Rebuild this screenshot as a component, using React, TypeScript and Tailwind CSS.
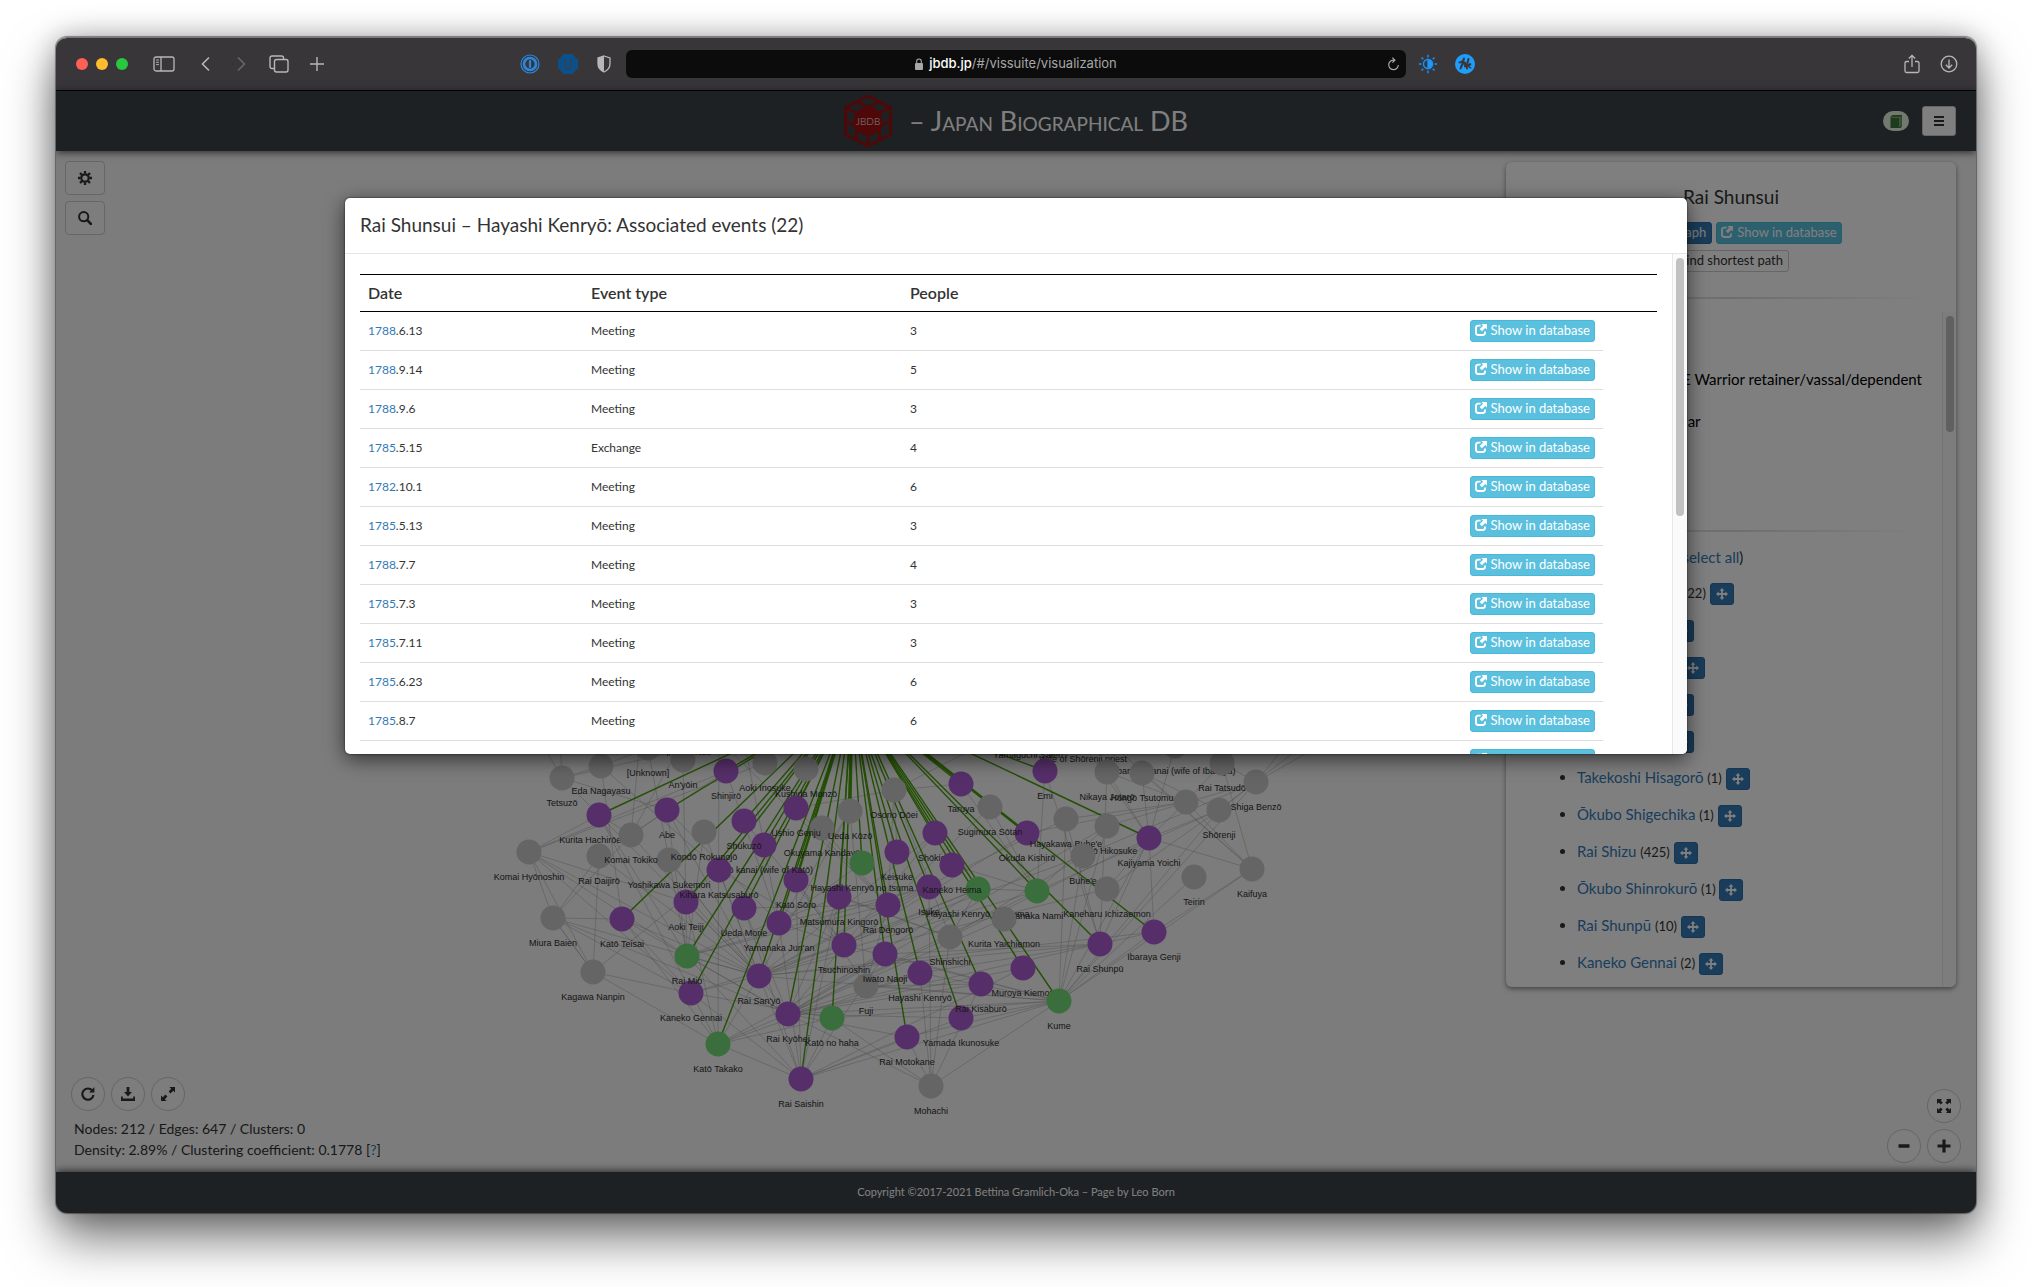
import React from "react";

type Kind = "n" | "p" | "g";
type GraphNode = [number, number, Kind, string];

const HUB: [number, number] = [852, 697];

/* Drawing order matters: later nodes lie over earlier labels. */
const NODES: GraphNode[] = [
  [620, 724, "n", "Junojirō"],
  [669, 728, "n", "Ir"],
  [703, 727, "n", "Nao"],
  [989, 726, "n", "Nimouji"],
  [1028, 730, "n", "Yamaguchi Saien"],
  [1083, 734, "n", "Wife of Shōrenji priest"],
  [1175, 746, "n", "Ibaraya kanai (wife of Ibaraya)"],
  [562, 778, "n", "Tetsuzō"],
  [601, 766, "n", "Eda Nagayasu"],
  [648, 748, "n", "[Unknown]"],
  [683, 760, "n", "An'yōin"],
  [765, 763, "n", "Aoki Inosuke"],
  [806, 769, "n", "Kushida Monzō"],
  [726, 771, "p", "Shinjirō"],
  [599, 815, "p", "Kurita Hachirōemon"],
  [667, 810, "p", "Abe"],
  [669, 860, "n", "Yoshikawa Sukemori"],
  [599, 856, "n", "Rai Daijirō"],
  [631, 835, "n", "Komai Tokiko"],
  [529, 852, "n", "Komai Hyōnoshin"],
  [553, 918, "n", "Miura Baien"],
  [593, 972, "n", "Kagawa Nanpin"],
  [822, 828, "n", "Okuyama Kandayū"],
  [850, 811, "n", "Ueda Kōzō"],
  [796, 880, "p", "Katō Sōro"],
  [764, 845, "p", "Katō kanai (wife of Katō)"],
  [744, 821, "p", "Shukuzō"],
  [796, 808, "p", "Ushio Genju"],
  [686, 902, "p", "Aoki Teiji"],
  [744, 908, "p", "Ueda Morie"],
  [719, 870, "p", "Kihara Katsusaburō"],
  [704, 832, "n", "Kondō Rokunojō"],
  [779, 923, "p", "Yamanaka Jun'an"],
  [839, 897, "p", "Matsumura Kingorō"],
  [862, 863, "g", "Hayashi Kenryō no tsuma"],
  [622, 919, "p", "Katō Teisai"],
  [691, 993, "p", "Kaneko Gennai"],
  [687, 956, "g", "Rai Mio"],
  [788, 1014, "p", "Rai Kyōhei"],
  [759, 976, "p", "Rai San'yō"],
  [832, 1018, "g", "Katō no haha"],
  [718, 1044, "g", "Katō Takako"],
  [801, 1079, "p", "Rai Saishin"],
  [866, 986, "n", "Fuji"],
  [844, 945, "p", "Tsuchinoshin"],
  [894, 790, "n", "Osono Dōei"],
  [897, 852, "p", "Keisuke"],
  [935, 833, "p", "Shōkichi"],
  [929, 887, "p", "Isuke"],
  [978, 889, "g", "Hayashi Kenryō no tsuma"],
  [952, 865, "p", "Kaneko Heima"],
  [885, 954, "p", "Iwato Naoji"],
  [888, 905, "p", "Rai Dengorō"],
  [950, 937, "n", "Shinshichi"],
  [920, 973, "p", "Hayashi Kenryō"],
  [961, 1018, "p", "Yamada Ikunosuke"],
  [981, 984, "p", "Rai Kisaburō"],
  [907, 1037, "p", "Rai Motokane"],
  [1023, 968, "p", "Muroya Kiemon"],
  [961, 784, "p", "Taruya"],
  [1045, 771, "p", "Emi"],
  [1027, 833, "p", "Okuda Kishirō"],
  [990, 807, "n", "Sugimura Sōtan"],
  [1037, 891, "g", "Tanaka Nami"],
  [1004, 919, "n", "Kurita Yaichiemon"],
  [1066, 819, "n", "Hayakawa Buhe'e"],
  [1107, 826, "n", "Kudō Hikosuke"],
  [1083, 856, "n", "Buhe'e"],
  [1107, 889, "n", "Kaneharu Ichizaemon"],
  [1107, 772, "n", "Nikaya Jotarō"],
  [1142, 773, "n", "Hongō Tsutomu"],
  [1222, 763, "n", "Rai Tatsudō"],
  [1256, 782, "n", "Shiga Benzō"],
  [1219, 810, "n", "Shōrenji"],
  [1186, 802, "n", ""],
  [1149, 838, "p", "Kajiyama Yoichi"],
  [1194, 877, "n", "Teirin"],
  [1252, 869, "n", "Kaifuya"],
  [1154, 932, "p", "Ibaraya Genji"],
  [1100, 944, "p", "Rai Shunpū"],
  [1059, 1001, "g", "Kume"],
  [931, 1086, "n", "Mohachi"],
];

/* Each entry: a source point followed by the points it is tied to. */
const TIES: number[][] = [
  [759, 976, 553, 918, 622, 919, 686, 902, 687, 956, 529, 852, 719, 870, 669, 860, 599, 815, 631, 835, 850, 811, 888, 905, 929, 887, 978, 889, 1037, 891, 1107, 889, 1083, 856, 1100, 944, 1154, 932, 935, 833, 599, 856, 704, 832, 667, 810],
  [788, 1014, 687, 956, 622, 919, 744, 908, 844, 945, 885, 954, 920, 973, 950, 937, 1023, 968, 1100, 944, 978, 889, 1004, 919, 1037, 891, 1059, 1001, 981, 984, 961, 1018, 907, 1037, 669, 860, 839, 897, 553, 918, 1107, 826],
  [801, 1079, 718, 1044, 691, 993, 687, 956, 744, 908, 779, 923, 759, 976, 832, 1018, 839, 897, 885, 954, 907, 1037, 961, 1018, 1059, 1001, 1023, 968, 796, 880],
  [718, 1044, 622, 919, 686, 902, 599, 815, 759, 976, 788, 1014, 832, 1018, 885, 954, 920, 973, 719, 740, 593, 972],
  [1059, 1001, 961, 1018, 920, 973, 885, 954, 866, 986, 832, 1018, 907, 1037, 1149, 838, 1252, 869, 1194, 877, 1107, 826, 1154, 932, 1066, 819, 1219, 810, 1256, 782, 844, 945, 759, 976, 1083, 856],
  [931, 1086, 832, 1018, 788, 1014, 1059, 1001, 920, 973, 929, 887, 981, 984, 907, 1037, 950, 937],
  [691, 993, 593, 972, 553, 918, 529, 852, 759, 976, 832, 1018, 622, 919, 844, 945],
  [553, 918, 529, 852, 631, 835, 593, 972, 622, 919, 599, 856],
  [593, 972, 599, 856, 553, 918, 719, 870, 529, 852],
  [529, 852, 599, 815, 686, 902, 687, 956, 726, 771, 765, 763],
  [562, 778, 601, 766, 540, 740, 599, 815, 667, 810, 560, 740, 726, 740],
  [601, 766, 648, 748, 719, 870, 622, 919, 590, 740],
  [687, 956, 667, 810, 648, 748, 704, 832, 683, 760, 599, 815, 839, 897, 888, 905, 929, 887],
  [631, 835, 667, 810, 726, 771, 683, 740, 640, 740, 599, 815],
  [1256, 782, 1107, 826, 1222, 763, 1219, 810, 1290, 740, 1330, 740, 1083, 856],
  [1219, 810, 1149, 838, 1107, 889, 1310, 740, 1142, 773, 1037, 891],
  [1186, 802, 1107, 772, 1252, 869, 1066, 819, 1027, 833, 1222, 763, 1149, 838],
  [1149, 838, 1107, 772, 1142, 773, 1252, 869, 1080, 740, 1107, 889, 1154, 932, 1175, 746],
  [1100, 944, 1107, 772, 1045, 771, 1154, 932, 920, 973, 885, 954, 1066, 819, 1149, 838],
  [1252, 869, 1154, 932, 1222, 763, 1107, 740, 1142, 773],
  [1037, 891, 990, 807, 1107, 826, 961, 784, 952, 865, 929, 887, 1045, 771],
  [950, 937, 839, 897, 978, 889, 1083, 856, 796, 880, 1149, 838, 894, 790],
  [844, 945, 796, 880, 719, 870, 929, 887, 978, 889, 779, 923, 935, 833, 1027, 833, 744, 821],
  [888, 905, 744, 908, 796, 808, 822, 828, 894, 790, 990, 807, 1066, 819, 719, 740],
  [779, 923, 726, 771, 667, 810, 744, 740, 850, 811, 862, 863, 929, 887],
  [894, 790, 860, 740, 961, 784, 796, 808, 990, 740, 897, 852],
  [866, 986, 796, 880, 888, 905, 850, 811, 981, 984, 920, 973],
];

const FILL: Record<Kind, string> = { n: "#cacaca", p: "#ac5fd4", g: "#74dc78" };

function Network() {
  return (
    <svg
      className="absolute inset-0 h-full w-full"
      viewBox="56 151 1920 1021"
      preserveAspectRatio="xMidYMax meet"
      role="img"
      aria-label="Network graph"
    >
      <g stroke="#8c8c8c" strokeOpacity="0.36" strokeWidth="1">
        {TIES.flatMap((t, i) => {
          const out: React.ReactElement[] = [];
          for (let k = 2; k < t.length; k += 2) {
            out.push(<line key={`${i}-${k}`} x1={t[0]} y1={t[1]} x2={t[k]} y2={t[k + 1]} />);
          }
          return out;
        })}
      </g>
      <g stroke="#48a00a" strokeWidth="1.4">
        {NODES.filter((n) => n[2] !== "n").map((n, i) => (
          <line key={i} x1={HUB[0]} y1={HUB[1]} x2={n[0]} y2={n[1]} />
        ))}
        <line x1={HUB[0] + 3} y1={HUB[1]} x2="1027" y2="833" strokeWidth="2.4" />
        <line x1={HUB[0]} y1={HUB[1]} x2="796" y2="880" strokeWidth="2.4" />
        <line x1={HUB[0]} y1={HUB[1]} x2="850" y2="811" strokeWidth="3" />
      </g>
      <g fontFamily="'Liberation Sans', Arial, sans-serif" fontSize="9" textAnchor="middle" fill="#2c2c2c">
        {NODES.map((n, i) => (
          <g key={i}>
            <circle cx={n[0]} cy={n[1]} r="12.5" fill={FILL[n[2]]} />
            <text x={n[0]} y={n[1] + 28}>{n[3]}</text>
          </g>
        ))}
      </g>
    </svg>
  );
}

/* ---------- icons ---------- */

type IconProps = { className?: string };

const ShareIcon = ({ className = "size-3" }: IconProps) => (
  <svg className={className} viewBox="0 0 12 12" fill="none" aria-hidden="true">
    <path d="M5.6 1.6H3.2A2.2 2.2 0 0 0 1 3.8v5A2.2 2.2 0 0 0 3.2 11h4.6A2.2 2.2 0 0 0 10 8.8V7.4" stroke="currentColor" strokeWidth="1.9" />
    <path d="M6.4 0H12v5.6L10.300 3.900 6.900 7.300 4.700 5.100 8.100 1.700z" fill="currentColor" />
  </svg>
);

const MoveIcon = ({ className = "size-3" }: IconProps) => (
  <svg className={className} viewBox="0 0 12 12" fill="currentColor" aria-hidden="true">
    <path d="M6 0l2.4 2.7H6.9v2.4h2.4V3.6L12 6 9.3 8.4V6.9H6.9v2.4h1.5L6 12 3.6 9.3h1.5V6.9H2.7v1.5L0 6l2.7-2.4v1.5h2.4V2.7H3.6z" />
  </svg>
);

const CogIcon = () => (
  <svg className="size-[14px]" viewBox="0 0 14 14" fill="none" stroke="currentColor" aria-hidden="true">
    <circle cx="7" cy="7" r="3.7" strokeWidth="2.2" />
    <path d="M7 0v2.6M7 11.4V14M0 7h2.6M11.4 7H14M2 2l1.9 1.9M10.1 10.1L12 12M12 2l-1.9 1.9M3.9 10.1L2 12" strokeWidth="2.3" />
  </svg>
);

const SearchIcon = () => (
  <svg className="size-[14px]" viewBox="0 0 14 14" fill="none" stroke="currentColor" aria-hidden="true">
    <circle cx="5.7" cy="5.7" r="4.6" strokeWidth="2" />
    <path d="M9.2 9.2l3.8 3.8" strokeWidth="2.6" strokeLinecap="round" />
  </svg>
);

const RepeatIcon = () => (
  <svg className="size-[14px]" viewBox="0 0 14 14" fill="none" aria-hidden="true">
    <path d="M11.2 3.4A5.6 5.6 0 1 0 12.5 8" stroke="currentColor" strokeWidth="2.1" />
    <path d="M13.4 0v5.4H8z" fill="currentColor" />
  </svg>
);

const SaveIcon = () => (
  <svg className="size-[14px]" viewBox="0 0 14 14" fill="currentColor" aria-hidden="true">
    <path d="M5.6 0h2.8v5H11L7 9.6 3 5h2.6zM0 9.4h1.8v2h10.4v-2H14V14H0z" />
  </svg>
);

const ResizeFullIcon = () => (
  <svg className="size-[14px]" viewBox="0 0 14 14" fill="currentColor" aria-hidden="true">
    <path d="M8.4 0H14v5.6l-1.8-1.8-2.6 2.6-2-2 2.6-2.6zM5.6 14H0V8.4l1.8 1.8 2.6-2.6 2 2-2.6 2.6z" />
  </svg>
);

const FullscreenIcon = () => (
  <svg className="size-[14px]" viewBox="0 0 14 14" fill="currentColor" aria-hidden="true">
    <path d="M0 0h5L3.7 1.5 5.7 3.5 3.9 5.5 1.7 3.5 0 5zM14 0v5l-1.6-1.5-2.2 2-1.9-2 2-2L9 0zM0 14V9l1.6 1.5 2.2-2 1.9 2-2 2L5 14zM14 14H9l1.3-1.5-2-2 1.9-2 2.2 2L14 9z" />
  </svg>
);

const MinusIcon = () => (
  <svg className="size-[14px]" viewBox="0 0 14 14" fill="currentColor" aria-hidden="true">
    <rect x="1.5" y="5.2" width="11" height="3.6" rx="0.4" />
  </svg>
);

const PlusIcon = () => (
  <svg className="size-[14px]" viewBox="0 0 14 14" fill="currentColor" aria-hidden="true">
    <path d="M5.4.6h3.2v4.8h4.9v3.2H8.6v4.8H5.4V8.6H.5V5.4h4.9z" />
  </svg>
);

const Logo = () => (
  <span className="relative flex h-[54px] w-12 items-center justify-center">
    <svg className="absolute inset-0 h-full w-full" viewBox="0 0 48 54" fill="none" stroke="#9f1010" aria-hidden="true">
      <path d="M24 2l22.500 11.500v27L24 52 1.500 40.500v-27z" strokeWidth="3" strokeLinejoin="round" />
      <path d="M2 13.500L24 25l22-11.500M24 25v27M13 7.500l22.500 12M35 7.500l-22.500 12M2 27l22 12 22-12M12.500 19v27M35.500 19v27" strokeWidth="3" />
      <circle cx="24" cy="27" r="14.500" fill="#9f1010" stroke="none" />
    </svg>
    <span className="relative text-[10px] font-light text-white">JBDB</span>
  </span>
);

/* ---------- browser chrome ---------- */

function Toolbar() {
  return (
    <header className="grid h-[53px] shrink-0 grid-cols-[1fr_minmax(0,780px)_1fr] items-center border-b border-black bg-[#39363a] text-[#b8b6b9]">
      <div className="flex items-center justify-between pr-[14px] pl-5">
        <div className="flex items-center">
          <div className="flex gap-2">
            <button aria-label="Close" className="size-3 rounded-full bg-[#ff5f57]" />
            <button aria-label="Minimize" className="size-3 rounded-full bg-[#febc2e]" />
            <button aria-label="Zoom" className="size-3 rounded-full bg-[#28c840]" />
          </div>
          <button aria-label="Sidebar" className="ml-[25px]">
            <svg width="22" height="16" viewBox="0 0 22 16" fill="none" stroke="currentColor" strokeWidth="1.300">
              <rect x="1" y="1" width="20" height="14" rx="2" />
              <path d="M8 1v14" />
              <path d="M3.200 4h2.600M3.200 6.300h2.600M3.200 8.600h2.600" strokeWidth="1" />
            </svg>
          </button>
          <button aria-label="Back" className="ml-6">
            <svg width="14" height="16" viewBox="0 0 14 16" fill="none" stroke="currentColor" strokeWidth="1.600"><path d="M10 1.500L3.500 8l6.500 6.500" /></svg>
          </button>
          <button aria-label="Forward" className="ml-[22px] text-[#69666a]">
            <svg width="14" height="16" viewBox="0 0 14 16" fill="none" stroke="currentColor" strokeWidth="1.600"><path d="M3 1.500L9.500 8 3 14.500" /></svg>
          </button>
          <button aria-label="Tabs" className="ml-5">
            <svg width="20" height="18" viewBox="0 0 20 18" fill="none" stroke="currentColor" strokeWidth="1.400">
              <rect x="5.500" y="4.500" width="13.500" height="12.500" rx="2" />
              <path d="M5.500 13.500H3a2 2 0 0 1-2-2V3a2 2 0 0 1 2-2h9.500a2 2 0 0 1 2 2v1.500" />
            </svg>
          </button>
          <button aria-label="New tab" className="ml-5">
            <svg width="16" height="16" viewBox="0 0 16 16" fill="none" stroke="currentColor" strokeWidth="1.400"><path d="M8 1v14M1 8h14" /></svg>
          </button>
        </div>
        <div className="flex items-center">
          <button aria-label="Password manager">
            <svg width="20" height="20" viewBox="0 0 20 20" fill="none" stroke="#2b87dc">
              <circle cx="10" cy="10" r="9" strokeWidth="1.200" />
              <circle cx="10" cy="10" r="6" strokeWidth="2.600" />
              <path d="M10 6.300v7.400" strokeWidth="2.200" />
            </svg>
          </button>
          <button aria-label="Content blocker" className="ml-[18px]">
            <svg width="20" height="20" viewBox="0 0 20 20">
              <path d="M6 0h8l6 6v8l-6 6H6l-6-6V6z" fill="#0c5089" />
              <path d="M7 5v6.500a3 3 0 0 0 6 0V5" fill="none" stroke="#2b4560" strokeWidth="2" />
            </svg>
          </button>
          <button aria-label="Privacy report" className="ml-[18px]">
            <svg width="16" height="18" viewBox="0 0 16 18" fill="none">
              <path d="M8 1l6 2v6c0 4-3 6.500-6 8-3-1.500-6-4-6-8V3z" stroke="#b8b6b9" strokeWidth="1.300" />
              <path d="M8 1v16c-3-1.500-6-4-6-8V3z" fill="#b8b6b9" />
            </svg>
          </button>
        </div>
      </div>
      <div className="relative flex h-7 items-center justify-center gap-[6px] rounded-md bg-[#0c0c0c] font-[Inter,sans-serif] text-[13px] text-[#a7a7a7]">
        <svg width="8" height="12" viewBox="0 0 8 12" aria-hidden="true">
          <rect y="5" width="8" height="7" rx="1" fill="#a7a7a7" />
          <path d="M1.700 5.500V3.300a2.300 2.300 0 0 1 4.600 0v2.200" fill="none" stroke="#a7a7a7" strokeWidth="1.100" />
        </svg>
        <span><span className="font-medium text-white">jbdb.jp</span>/#/vissuite/visualization</span>
        <button aria-label="Reload" className="absolute right-[6px]">
          <svg width="13" height="14" viewBox="0 0 13 14" fill="none" stroke="#a7a7a7" strokeWidth="1.200">
            <path d="M7.500 3.200A4.800 4.800 0 1 0 11.300 8M5.400.7l2.500 2.500-2.500 2.500" />
          </svg>
        </button>
      </div>
      <div className="flex items-center justify-between pr-[18px] pl-3">
        <div className="flex items-center gap-[17px]">
          <button aria-label="Brightness">
            <svg width="20" height="20" viewBox="0 0 20 20" fill="none" stroke="#1d8fee" strokeWidth="1.500">
              <circle cx="10" cy="10" r="4.500" />
              <path d="M10 5.500a4.500 4.500 0 0 1 0 9z" fill="#1d9bff" />
              <path d="M10 .8v2.600M10 16.600v2.600M.8 10h2.600M16.600 10h2.600M3.500 3.500l1.800 1.800M14.700 14.700l1.800 1.800M16.500 3.500l-1.800 1.800M5.300 14.700l-1.800 1.800" />
            </svg>
          </button>
          <button aria-label="Notes">
            <svg width="20" height="20" viewBox="0 0 20 20" fill="none">
              <circle cx="10" cy="10" r="10" fill="#1f9dfb" />
              <path d="M4.500 8.500C7 8 9 6 9 4.500 8.500 8 6.500 11 5.500 14.500 7 11 9 8.500 10 8.500s-.8 4 .2 4C11.500 12.500 13 7.500 13.500 5 12.500 9 11.500 12 12 14.500" stroke="#39363a" strokeWidth="1.900" strokeLinecap="round" strokeLinejoin="round" />
              <path d="M12.500 12c1-1.500 2.500-2.500 3-2s-1.500 1.800-2.500 1.800c1.300.2 1.200 2.200 2.700 2" stroke="#39363a" strokeWidth="1.500" strokeLinecap="round" />
            </svg>
          </button>
        </div>
        <div className="flex items-center gap-[19px]">
          <button aria-label="Share">
            <svg width="18" height="20" viewBox="0 0 18 20" fill="none" stroke="currentColor" strokeWidth="1.300">
              <path d="M6 7.500H3.500A1.500 1.500 0 0 0 2 9v8a1.500 1.500 0 0 0 1.500 1.500h11A1.500 1.500 0 0 0 16 17V9a1.500 1.500 0 0 0-1.500-1.500H12M9 13V1.500M5.800 4.500L9 1.300l3.200 3.200" />
            </svg>
          </button>
          <button aria-label="Downloads">
            <svg width="18" height="18" viewBox="0 0 18 18" fill="none" stroke="currentColor" strokeWidth="1.300">
              <circle cx="9" cy="9" r="7.800" />
              <path d="M9 4.500v8.500M5.800 9.800L9 13l3.200-3.200" />
            </svg>
          </button>
        </div>
      </div>
    </header>
  );
}

/* ---------- page ---------- */

function NavBar() {
  return (
    <nav className="relative z-10 grid h-[60px] shrink-0 grid-cols-[1fr_auto_1fr] items-center bg-[#3a4247] pr-5 pl-5 shadow-[0_1px_8px_rgba(0,0,0,0.7)]">
      <span />
      <a href="#/" className="flex items-center gap-[17px] text-[27px] text-white">
        <Logo />
        <span className="[font-variant:small-caps]">– Japan Biographical DB</span>
      </a>
      <div className="flex items-center justify-end gap-[13px]">
        <button aria-label="Glossary" className="flex h-5 w-[26px] items-center justify-center rounded-full bg-[#e4f4e0]">
          <svg width="12" height="13" viewBox="0 0 12 13" aria-hidden="true">
            <path d="M2.500 0H12v11.500L10.500 13H.5V1.800z" fill="#3c763d" />
            <path d="M1.500 2.300h8.300v9.500M11 1v10.500" fill="none" stroke="#a5cfa0" strokeWidth="0.800" />
          </svg>
        </button>
        <button aria-label="Menu" className="flex h-[30px] w-[34px] items-center justify-center rounded-[3px] border border-[#ccc] bg-white text-[#333]">
          <svg width="10" height="10" viewBox="0 0 10 10" fill="currentColor" aria-hidden="true">
            <path d="M0 0h10v2H0zM0 4h10v2H0zM0 8h10v2H0z" />
          </svg>
        </button>
      </div>
    </nav>
  );
}

const InfoButton = () => (
  <button className="inline-flex h-[22px] items-center gap-1 rounded-[3px] border border-[#46b8da] bg-[#5bc0de] px-1 text-[13px] whitespace-nowrap text-white">
    <ShareIcon className="mb-[2px] size-3" />
    Show in database
  </button>
);

const RELATED: [string, number][] = [
  ["Hayashi Kenryō", 22],
  ["Itō Shinjirō", 1],
  ["Rai Kisaburō", 3],
  ["Katō Teisai", 1],
  ["Itō Shinjirō", 1],
  ["Takekoshi Hisagorō", 1],
  ["Ōkubo Shigechika", 1],
  ["Rai Shizu", 425],
  ["Ōkubo Shinrokurō", 1],
  ["Rai Shunpū", 10],
  ["Kaneko Gennai", 2],
];

function PersonPanel() {
  return (
    <aside className="relative mt-[11px] mr-5 ml-auto flex h-[825px] w-[450px] flex-col overflow-hidden rounded-md bg-white text-[15px] text-[#333] shadow-[0_2px_5px_rgba(0,0,0,0.45)]">
      <h2 className="mt-[23px] text-center text-[19px] leading-6">Rai Shunsui</h2>
      <div className="mt-[13px] flex flex-col items-center gap-[6px] text-[13px]">
        <div className="flex gap-1 pr-2">
          <button className="h-[22px] rounded-[3px] border border-[#2e6da4] bg-[#337ab7] px-[5px] text-white">Center in graph</button>
          <InfoButton />
        </div>
        <button className="h-[22px] rounded-[3px] border border-[#ccc] bg-white px-[5px]">Find shortest path</button>
      </div>
      <div className="mx-5 mt-[25px] h-[2px] bg-linear-to-r from-transparent via-[#dcdcdc] to-transparent" />
      <div className="mt-[13px] flex min-h-0 flex-1">
        <div className="min-w-0 flex-1 overflow-hidden px-5">
          <p className="mt-[57px] text-right leading-5 whitespace-nowrap text-black">Status: 武士 / 家臣 E Warrior retainer/vassal/dependent</p>
          <p className="mt-[22px] pl-[72px] leading-5 text-black">Occup.: Scholar</p>
          <div className="mt-[99px] h-[2px] bg-linear-to-r from-transparent via-[#dcdcdc] to-transparent" />
          <p className="mt-[15px] pl-[110px] leading-5">Edges (<a href="#all" className="text-[#337ab7]">select all</a>)</p>
          <ul className="mt-[7px] list-disc pl-[51px]">
            {RELATED.map(([name, count], i) => (
              <li key={i} className="h-[37px] leading-[37px]">
                <a href="#person" className="text-[#337ab7]">{name}</a> <span className="text-[13px]">({count})</span>{" "}
                <button aria-label={`Move to ${name}`} className="inline-flex h-[22px] w-6 items-center justify-center rounded-[3px] border border-[#2e6da4] bg-[#337ab7] align-middle text-white">
                  <MoveIcon />
                </button>
              </li>
            ))}
          </ul>
        </div>
        <div className="w-[14px] shrink-0 border-l border-[#e8e8e8] bg-[#fafafa] pt-1 pl-[3px]">
          <div className="h-[116px] w-2 rounded-full bg-[#c1c1c1]" />
        </div>
      </div>
    </aside>
  );
}

const ROUND = "flex size-[34px] items-center justify-center rounded-full border border-[#ccc] bg-white/40 text-[#333]";
const SQUARE = "flex h-[34px] w-10 items-center justify-center rounded-[4px] border border-[#ccc] bg-white/40 text-[#333]";

function Workspace() {
  return (
    <main className="relative min-h-0 flex-1 bg-[#f8f8f8] text-[#333]">
      <Network />
      <div className="absolute top-[10px] left-[9px] flex flex-col gap-[6px]">
        <button aria-label="Settings" className={SQUARE}><CogIcon /></button>
        <button aria-label="Search" className={SQUARE}><SearchIcon /></button>
      </div>
      <PersonPanel />
      <div className="absolute bottom-3 left-[15px]">
        <div className="flex gap-[6px]">
          <button aria-label="Reload graph" className={ROUND}><RepeatIcon /></button>
          <button aria-label="Download graph" className={ROUND}><SaveIcon /></button>
          <button aria-label="Expand graph" className={ROUND}><ResizeFullIcon /></button>
        </div>
        <p className="mt-[7px] pl-[3px] text-sm leading-[21px]">
          Nodes: 212 / Edges: 647 / Clusters: 0<br />
          Density: 2.89% / Clustering coefficient: 0.1778 [<a href="#help" className="text-[#337ab7]">?</a>]
        </p>
      </div>
      <div className="absolute right-[15px] bottom-[9px] flex flex-col items-end gap-[6px]">
        <button aria-label="Fit" className={ROUND}><FullscreenIcon /></button>
        <div className="flex gap-[6px]">
          <button aria-label="Zoom out" className={ROUND}><MinusIcon /></button>
          <button aria-label="Zoom in" className={ROUND}><PlusIcon /></button>
        </div>
      </div>
    </main>
  );
}

/* ---------- dialog ---------- */

const EVENTS: [string, string, string, number][] = [
  ["1788", ".6.13", "Meeting", 3],
  ["1788", ".9.14", "Meeting", 5],
  ["1788", ".9.6", "Meeting", 3],
  ["1785", ".5.15", "Exchange", 4],
  ["1782", ".10.1", "Meeting", 6],
  ["1785", ".5.13", "Meeting", 3],
  ["1788", ".7.7", "Meeting", 4],
  ["1785", ".7.3", "Meeting", 3],
  ["1785", ".7.11", "Meeting", 3],
  ["1785", ".6.23", "Meeting", 6],
  ["1785", ".8.7", "Meeting", 6],
];

function EventsDialog() {
  return (
    <section role="dialog" aria-labelledby="dialog-title" className="mx-auto flex h-[556px] w-[70%] max-w-[1342px] flex-col overflow-hidden rounded-[5px] bg-white text-[#333] shadow-[0_5px_20px_rgba(0,0,0,0.6),0_0_2px_rgba(0,0,0,0.8)]">
      <h1 id="dialog-title" className="border-b border-[#e5e5e5] px-[15px] pt-[15px] pb-4 text-[19px] leading-6">
        Rai Shunsui – Hayashi Kenryō: Associated events (22)
      </h1>
      <div className="flex min-h-0 flex-1">
        <div className="min-w-0 flex-1 overflow-hidden pt-5 pr-[15px] pl-[15px]">
          <table className="w-full table-fixed border-collapse text-left text-xs">
            <colgroup>
              <col className="w-[223px]" />
              <col className="w-[319px]" />
              <col />
              <col className="w-[141px]" />
              <col className="w-[54px]" />
            </colgroup>
            <thead>
              <tr className="h-[37px] border-y border-black text-base">
                <th className="px-2 font-semibold">Date</th>
                <th className="px-2 font-semibold">Event type</th>
                <th className="px-2 font-semibold" colSpan={3}>People</th>
              </tr>
            </thead>
            <tbody>
              {EVENTS.map(([year, rest, type, people], i) => (
                <tr key={i} className="h-[39px]">
                  <td className="border-b border-[#ddd] px-2"><a href="#year" className="text-[#337ab7]">{year}</a>{rest}</td>
                  <td className="border-b border-[#ddd] px-2">{type}</td>
                  <td className="border-b border-[#ddd] px-2">{people}</td>
                  <td className="border-b border-[#ddd] pr-2 text-right"><InfoButton /></td>
                  <td />
                </tr>
              ))}
              <tr className="h-[39px]">
                <td colSpan={3} />
                <td className="pr-2 text-right"><InfoButton /></td>
                <td />
              </tr>
            </tbody>
          </table>
        </div>
        <div className="w-[15px] shrink-0 border-l border-[#e8e8e8] bg-[#fafafa] pt-1 pl-[3px]">
          <div className="h-[258px] w-2 rounded-full bg-[#c1c1c1]" />
        </div>
      </div>
    </section>
  );
}

export default function App() {
  return (
    <div className="flex h-screen flex-col bg-white px-14 pt-[37px] pb-[74px] font-[Lato,'Noto_Sans_CJK_JP',sans-serif]">
      <div className="flex min-h-0 flex-1 flex-col overflow-hidden rounded-[11px] border-t border-[#777] shadow-[0_25px_50px_rgba(0,0,0,0.55),0_0_28px_rgba(0,0,0,0.28),0_0_1px_1px_rgba(0,0,0,0.4)]">
        <Toolbar />
        <div className="relative flex min-h-0 flex-1 flex-col">
          <NavBar />
          <Workspace />
          <footer className="relative z-10 flex h-[41px] shrink-0 items-center justify-center bg-[#3a4247] text-[11px] text-white shadow-[0_-1px_8px_rgba(0,0,0,0.7)]">
            Copyright ©2017-2021 Bettina Gramlich-Oka – Page by Leo Born
          </footer>
          <div className="absolute inset-0 z-20 bg-black/50 pt-[107px]">
            <EventsDialog />
          </div>
        </div>
      </div>
    </div>
  );
}
